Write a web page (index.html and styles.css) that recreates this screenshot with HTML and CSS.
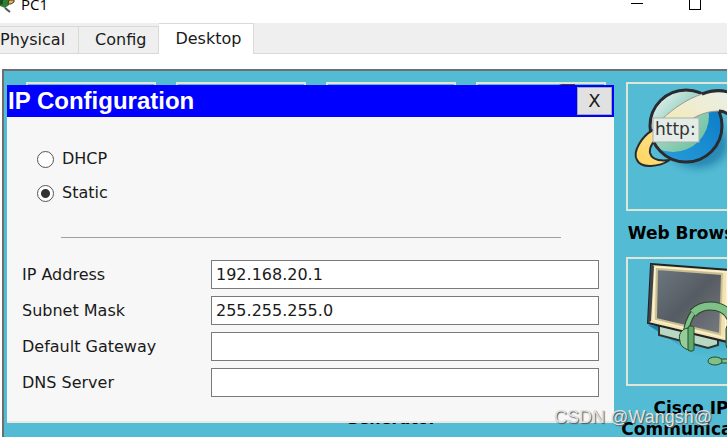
FILE: index.html
```html
<!DOCTYPE html>
<html lang="en">
<head>
    <meta charset="UTF-8">
    <meta name="viewport" content="width=device-width, initial-scale=1.0">
    <title>PC1</title>
    <link rel="stylesheet" href="styles.css">
</head>
<body>
    <header class="titlebar">
        <svg class="app-icon" width="16" height="13" viewBox="0 0 16 13" aria-hidden="true">
            <path d="M0 0h9v5l-4 3L0 6z" fill="#2f7d32"/>
            <path d="M0 0h3v4L0 5z" fill="#174f1b"/>
            <path d="M9 0h5v2l-3 2H8z" fill="#e0b45c" stroke="#4a3a1c"/>
            <path d="M5 8l5 4" stroke="#555" stroke-width="2" fill="none"/>
        </svg>
        <span class="title">PC1</span>
        <div class="window-buttons">
            <button type="button" aria-label="Minimize">
                <svg width="12" height="12" viewBox="0 0 12 12"><path d="M0 5.5h12" stroke="#000"/></svg>
            </button>
            <button type="button" aria-label="Maximize">
                <svg width="12" height="12" viewBox="0 0 12 12"><rect x=".5" y=".5" width="11" height="11" fill="none" stroke="#000"/></svg>
            </button>
        </div>
    </header>

    <nav class="tabs">
        <a href="#physical" class="tab">Physical</a>
        <a href="#config" class="tab">Config</a>
        <a href="#desktop" class="tab active">Desktop</a>
    </nav>

    <main class="desktop" id="desktop">
        <!-- Application icons -->
        <div class="apps">
            <div class="app"><div class="tile"></div></div>
            <div class="app"><div class="tile"></div></div>
            <div class="app"><div class="tile"></div></div>
            <div class="app">
                <div class="tile">
                    <svg viewBox="0 0 125 125" aria-hidden="true">
                        <path d="M70 6Q84 -3 97 0V12H70z" fill="#4a3a33"/>
                    </svg>
                </div>
            </div>
            <div class="app">
                <div class="tile">
                    <svg viewBox="0 0 125 125" aria-hidden="true">
                        <defs>
                            <linearGradient id="globe" x1="0" y1="0" x2="1" y2="1">
                                <stop offset=".2" stop-color="#eef6fa"/>
                                <stop offset=".5" stop-color="#a4d6c6"/>
                                <stop offset="1" stop-color="#5fbd95"/>
                            </linearGradient>
                            <linearGradient id="sea" x1="0" y1="1" x2="1" y2="0">
                                <stop offset="0" stop-color="#2b9fdc"/>
                                <stop offset="1" stop-color="#0878c4"/>
                            </linearGradient>
                            <linearGradient id="band" x1="0" y1="1" x2="1" y2="0">
                                <stop offset="0" stop-color="#f6e8a4"/>
                                <stop offset=".5" stop-color="#efedd0"/>
                                <stop offset="1" stop-color="#e8f0ee"/>
                            </linearGradient>
                            <linearGradient id="tail" x1="0" y1="1" x2="1" y2="0">
                                <stop offset="0" stop-color="#ffd55a"/>
                                <stop offset="1" stop-color="#fae59a"/>
                            </linearGradient>
                            <radialGradient id="shade">
                                <stop offset="0" stop-color="#1878a8"/>
                                <stop offset=".6" stop-color="#2f8fb8"/>
                                <stop offset="1" stop-color="#53bcd4" stop-opacity="0"/>
                            </radialGradient>
                            <clipPath id="globe-clip"><circle cx="58" cy="42" r="35"/></clipPath>
                        </defs>
                        <ellipse cx="70" cy="60" rx="42" ry="34" fill="url(#shade)"/>
                        <circle cx="58" cy="42" r="36" fill="url(#sea)"/>
                        <circle cx="45" cy="32" r="36" fill="url(#globe)" clip-path="url(#globe-clip)"/>
                        <circle cx="58" cy="42" r="36" fill="none" stroke="#2b2b2f" stroke-width="3"/>
                        <path d="M25 46C14 52 4 68 9 76C13 85 31 83 42 76C34 77 24 77 22 69C21 63 26 56 31 52z" fill="url(#tail)" stroke="#2b2b2f" stroke-width="2"/>
                        <path d="M33 36C48 22 60 15 74 10C87 5 99 5 110 13C120 22 119 38 108 50C108 39 102 27 91 27C76 27 61 34 48 48z" fill="url(#band)"/>
                        <path d="M33 36C48 22 60 15 74 10M48 48C61 34 76 27 91 27" fill="none" stroke="#999" stroke-width="1"/>
                        <path d="M74 10C87 5 99 5 110 13C120 22 119 38 108 50C108 39 102 27 91 27" fill="none" stroke="#2b2b2f" stroke-width="3"/>
                        <rect x="25" y="34" width="46" height="24" fill="#e4ece8" stroke="#a9b0ad"/>
                        <text x="27" y="51" class="http">http:</text>
                    </svg>
                </div>
                <span class="label">Web Browser</span>
            </div>
            <div class="app"><div class="tile"></div></div>
            <div class="app"><div class="tile"></div></div>
            <div class="app">
                <div class="tile"></div>
                <span class="label low">Generator</span>
            </div>
            <div class="app"><div class="tile"></div></div>
            <div class="app">
                <div class="tile">
                    <svg viewBox="0 0 125 125" aria-hidden="true">
                        <defs>
                            <linearGradient id="screen" x1="0" y1="0" x2="1" y2="1">
                                <stop offset="0" stop-color="#6d7780"/>
                                <stop offset=".5" stop-color="#565c63"/>
                                <stop offset="1" stop-color="#777b80"/>
                            </linearGradient>
                            <linearGradient id="floor" x1="0" y1="0" x2="0" y2="1">
                                <stop offset="0" stop-color="#1273a4"/>
                                <stop offset="1" stop-color="#53bcd4" stop-opacity="0"/>
                            </linearGradient>
                        </defs>
                        <path d="M20 66L112 76V102L66 96z" fill="url(#floor)"/>
                        <path d="M31 66L90 80V86L80 89L31 76z" fill="#b9d8c4" stroke="#2d3432" stroke-width="2"/>
                        <path d="M23 5L116 12L112 86L20 64z" fill="#f3e3b2" stroke="#222" stroke-width="2"/>
                        <path d="M23 5L26 7L23 62L20 64z" fill="#3c454c"/>
                        <path d="M27 8L99 13L97 79L25 61z" fill="none" stroke="#fff6d6" stroke-width="1"/>
                        <path d="M29 10L94 15L92 75L28 60z" fill="url(#screen)" stroke="#c9bd92" stroke-width="2"/>
                        <path d="M58 72C59 66 61 60 65 54" fill="none" stroke="#28472d" stroke-width="6"/>
                        <path d="M58 72C59 66 61 60 65 54" fill="none" stroke="#7fc186" stroke-width="4"/>
                        <path d="M65 54C70 49 76 47 82 47C93 47 101 52 104 62" fill="none" stroke="#28472d" stroke-width="9"/>
                        <path d="M65 54C70 49 76 47 82 47C93 47 101 52 104 62" fill="none" stroke="#7fc186" stroke-width="7"/>
                        <path d="M60 69C53 70 50 76 52 82C52 87 57 90 61 91V68z" fill="#93cd98" stroke="#28472d" stroke-width="1"/>
                        <rect x="60" y="67" width="6" height="25" rx="2" fill="#5eaa6b" stroke="#28472d"/>
                        <rect x="98" y="66" width="12" height="24" rx="4" fill="#5eaa6b" stroke="#28472d"/>
                        <path d="M90 102H101Q108 101 108 88" fill="none" stroke="#28472d" stroke-width="5"/>
                        <path d="M90 102H101Q108 101 108 88" fill="none" stroke="#7fc186" stroke-width="3"/>
                        <ellipse cx="87" cy="102" rx="7" ry="4" fill="#7fc186" stroke="#28472d"/>
                    </svg>
                </div>
                <span class="label">Cisco IP Communicator</span>
            </div>
        </div>

        <!-- IP configuration dialog -->
        <section class="dialog" aria-labelledby="dialog-title">
            <div class="dialog-header">
                <h1 id="dialog-title">IP Configuration</h1>
                <button type="button" class="close" aria-label="Close">X</button>
            </div>
            <form class="dialog-body">
                <div class="modes">
                    <label class="mode"><input type="radio" name="mode" value="dhcp">DHCP</label>
                    <label class="mode"><input type="radio" name="mode" value="static" checked>Static</label>
                </div>
                <hr>
                <div class="fields">
                    <label for="ip">IP Address</label>
                    <input type="text" id="ip" value="192.168.20.1">
                    <label for="mask">Subnet Mask</label>
                    <input type="text" id="mask" value="255.255.255.0">
                    <label for="gateway">Default Gateway</label>
                    <input type="text" id="gateway">
                    <label for="dns">DNS Server</label>
                    <input type="text" id="dns">
                </div>
            </form>
        </section>
    </main>

    <div class="watermark">CSDN @Wangsh@</div>
</body>
</html>
```

FILE: styles.css
```css
* {
    box-sizing: border-box;
}

body {
    display: flex;
    flex-direction: column;
    height: 100vh;
    margin: 0;
    overflow: hidden;
    background-color: #fff;
    color: #1a1a1a;
    font-family: "DejaVu Sans", Verdana, sans-serif;
    font-size: 16px;
}

/* Window title bar */
.titlebar {
    display: flex;
    align-items: flex-start;
    gap: 5px;
    flex: none;
    height: 23px;
}

.title {
    margin-top: -7px;
    color: #000;
    font-family: "Open Sans", sans-serif;
    font-size: 15px;
    line-height: 22px;
}

.window-buttons {
    display: flex;
    gap: 46px;
    margin: -2px 26px 0 auto;
}

.window-buttons button {
    padding: 0;
    border: none;
    background: none;
    line-height: 0;
}

/* Tabs */
.tabs {
    display: flex;
    align-items: flex-end;
    flex: none;
    height: 31px;
    background-color: #efefef;
    border-bottom: 1px solid #d9d9d9;
}

.tab {
    height: 27px;
    padding: 0 12px 0 16px;
    border-top: 1px solid #d9d9d9;
    border-right: 1px solid #d9d9d9;
    color: #1a1a1a;
    line-height: 26px;
    text-decoration: none;
}

.tab:first-child {
    padding: 0 13px 0 0;
}

.tab.active {
    height: 31px;
    margin-bottom: -1px;
    background-color: #fff;
    line-height: 30px;
}

/* Desktop with application tiles */
.desktop {
    position: relative;
    flex: 1;
    min-height: 0;
    margin: 15px 0 0 2px;
    padding: 11px 22px;
    overflow: hidden;
    border-top: 2px solid #6e6e6e;
    border-left: 2px solid #6e6e6e;
    background-color: #53bcd4;
}

.apps {
    display: grid;
    grid-template-columns: repeat(5, 130px);
    grid-auto-rows: 175px;
    column-gap: 20px;
}

.app {
    display: flex;
    flex-direction: column;
    align-items: center;
}

.tile {
    flex: none;
    width: 130px;
    height: 129px;
    border: 2px solid #dfe6d6;
}

.tile svg {
    display: block;
    width: 125px;
    height: 125px;
}

.http {
    fill: #333;
    font-size: 17px;
}

.label {
    margin: 12px -10px 0;
    color: #000;
    font-size: 17px;
    font-weight: bold;
    line-height: 21px;
    text-align: center;
}

.label.low {
    margin-top: 22px;
    font-size: 16px;
}

/* Dialog */
.dialog {
    position: absolute;
    top: 14px;
    left: 3px;
    right: 113px;
    background-color: #f7f7f7;
    border-bottom: 2px solid #e8e8e4;
}

.dialog-header {
    display: flex;
    justify-content: space-between;
    height: 32px;
    padding: 2px 2px 2px 1px;
    background-color: #0000fe;
}

.dialog-header h1 {
    margin: 0;
    color: #fff;
    font-family: "Liberation Sans", Arial, sans-serif;
    font-size: 24px;
    line-height: 28px;
}

.close {
    width: 35px;
    padding: 0;
    border: 1px solid #a8a8a8;
    background-color: #e1e1e1;
    color: #1a1a1a;
    font-family: inherit;
    font-size: 18px;
    line-height: 24px;
}

.dialog-body {
    padding: 30px 15px 24px;
}

.modes {
    display: grid;
    gap: 10px;
    margin-left: 15px;
}

.mode {
    display: flex;
    align-items: center;
    gap: 8px;
    line-height: 24px;
}

.mode input {
    width: 17px;
    height: 17px;
    margin: 0;
    appearance: none;
    border: 1px solid #555;
    border-radius: 50%;
    background-color: #fff;
}

.mode input:checked {
    background-image: radial-gradient(circle, #333 4px, #fff 5px);
}

hr {
    height: 1px;
    margin: 32px 38px 22px 39px;
    border: none;
    background-color: #a0a0a0;
}

.fields {
    display: grid;
    grid-template-columns: 181px 1fr;
    align-items: center;
    gap: 7px 8px;
}

.fields input {
    width: 100%;
    height: 29px;
    padding: 0 4px;
    border: 1px solid #7a7a7a;
    background-color: #fff;
    color: #1a1a1a;
    font-family: inherit;
    font-size: 16px;
}

.watermark {
    position: absolute;
    right: 15px;
    bottom: 9px;
    color: #dfe3e5;
    font-family: "Liberation Sans", Arial, sans-serif;
    font-size: 18px;
    line-height: 22px;
    text-shadow: 1px 1px 1px #555;
    pointer-events: none;
}
```
